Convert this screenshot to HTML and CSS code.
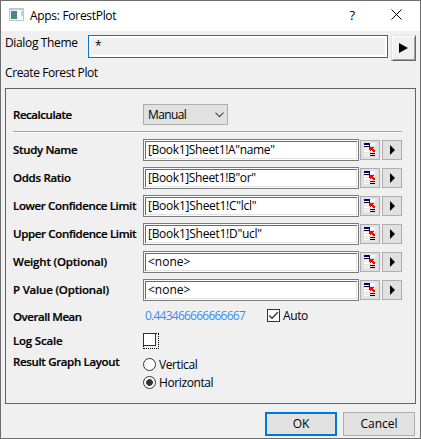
FILE: index.html
```html
<!DOCTYPE html>
<html lang="en">
<head>
<meta charset="utf-8">
<title>Apps: ForestPlot</title>
<link rel="stylesheet" href="styles.css">
</head>
<body>
<svg width="0" height="0" class="defs">
  <symbol id="pick" viewBox="0 0 11 13" shape-rendering="crispEdges">
    <path fill="#fff" d="M0 0h11v3H0zM0 5h11v1H0zM0 7h11v2H0zM0 10h11v1H0zM0 12h11v1H0z"/>
    <path fill="#000080" d="M0 0h6v2H0zM5 2h1v1H5z"/>
    <path fill="#000" d="M0 3h6v1H0zM6 10h5v1H6zM6 12h5v1H6z"/>
    <path fill="#f00" d="M5 4h5v1H9v1h1v1h1v2H9V8H8V7H7v1H6V7H5z"/>
  </symbol>
  <symbol id="arrow" viewBox="0 0 5 10"><path d="M0 0l5 5-5 5z"/></symbol>
</svg>
<div class="window">
  <header class="titlebar">
    <svg class="app" width="15" height="13" viewBox="0 0 15 13"><path fill="#c3c7cb" d="M0 0h15v13H0z"/><path fill="#eef1f5" d="M1 2h13v10H1z"/><path fill="#4b8594" d="M2 3h6v8H2z"/><path fill="#38936f" d="M2 7h5v3H2z"/><path fill="#fff" d="M9 2h4v10H9z"/><path fill="#b9d2e4" d="M12 3h2v5h-2z"/></svg>
    <h1><span class="t-title">Apps: ForestPlot</span></h1>
    <span class="help">?</span>
    <svg class="close" width="11" height="11" viewBox="0 0 11 11"><path d="M.5.5l10 10M10.5.5l-10 10" stroke="#000" fill="none"/></svg>
  </header>
  <div class="theme">
    <label><span class="t-theme">Dialog Theme</span></label>
    <div class="themebox">*</div>
    <button class="themebtn"><svg width="9" height="10" viewBox="0 0 9 10"><path d="M0 0l9 5-9 5z"/></svg></button>
  </div>
  <p class="desc"><span class="t-desc">Create Forest Plot</span></p>
  <main class="panel">
    <div class="recalc"><b class="t-recalc">Recalculate</b><div class="combo"><span class="t-manual">Manual</span><svg width="9" height="6" viewBox="0 0 9 6"><path d="M.5.7l4 4 4-4" fill="none" stroke="#444" stroke-width="1.1"/></svg></div></div>
    <hr>
    <div class="row"><b class="t-study">Study Name</b><div class="field"><span class="t-name">[Book1]Sheet1!A"name"</span></div><button class="pick"><svg width="11" height="13"><use href="#pick"/></svg></button><button><svg width="5" height="10"><use href="#arrow"/></svg></button></div>
    <div class="row"><b class="t-odds">Odds Ratio</b><div class="field"><span class="t-or">[Book1]Sheet1!B"or"</span></div><button class="pick"><svg width="11" height="13"><use href="#pick"/></svg></button><button><svg width="5" height="10"><use href="#arrow"/></svg></button></div>
    <div class="row"><b class="t-lower">Lower Confidence Limit</b><div class="field"><span class="t-lcl">[Book1]Sheet1!C"lcl"</span></div><button class="pick"><svg width="11" height="13"><use href="#pick"/></svg></button><button><svg width="5" height="10"><use href="#arrow"/></svg></button></div>
    <div class="row"><b class="t-lower">Upper Confidence Limit</b><div class="field"><span class="t-lcl">[Book1]Sheet1!D"ucl"</span></div><button class="pick"><svg width="11" height="13"><use href="#pick"/></svg></button><button><svg width="5" height="10"><use href="#arrow"/></svg></button></div>
    <div class="row"><b class="t-weight">Weight (Optional)</b><div class="field"><span class="t-none">&lt;none&gt;</span></div><button class="pick"><svg width="11" height="13"><use href="#pick"/></svg></button><button><svg width="5" height="10"><use href="#arrow"/></svg></button></div>
    <div class="row"><b class="t-weight">P Value (Optional)</b><div class="field"><span class="t-none">&lt;none&gt;</span></div><button class="pick"><svg width="11" height="13"><use href="#pick"/></svg></button><button><svg width="5" height="10"><use href="#arrow"/></svg></button></div>
    <div class="mean"><b class="t-mean">Overall Mean</b><span class="value"><span class="t-value">0.443466666666667</span></span><i class="check"><svg width="11" height="11" viewBox="0 0 11 11"><path d="M1.2 5.5l2.8 2.8L9.8 2.3" fill="none" stroke="#333" stroke-width="1.3"/></svg></i><span class="t-auto">Auto</span></div>
    <div class="log"><b class="t-log">Log Scale</b><div class="focus"><i class="check"></i></div></div>
    <div class="layout"><b class="t-layout">Result Graph Layout</b>
      <div class="radios"><label><i class="radio"></i><span class="t-vert">Vertical</span></label><label><i class="radio on"></i><span class="t-vert">Horizontal</span></label></div>
    </div>
  </main>
  <footer><button class="ok"><span>OK</span></button><button><span class="t-cancel">Cancel</span></button></footer>
</div>
</body>
</html>
```
FILE: styles.css
```css
* { box-sizing: border-box; }
body { margin: 0; font: 12px/16px "Open Sans", "Noto Sans", sans-serif; color: #000; }
.defs { position: absolute; }
svg { display: block; flex: none; }
button { font: inherit; color: #000; margin: 0; padding: 0; border-radius: 0; display: flex; align-items: center; justify-content: center; background: #e1e1e1; border: 1px solid #adadad; }
.window { width: 421px; height: 439px; border: 1px solid #6f6e6f; background: #f0f0f0; overflow: hidden; white-space: nowrap; }
.titlebar { height: 30px; background: #fff; display: flex; align-items: flex-start; padding: 7px 18px 0 8px; }
h1 { font: inherit; margin: 0 0 0 6px; flex: 1; }
.help { font-size: 13px; margin-right: 36px; margin-top: -1px; }
.close { margin-top: 1px; }
.theme { display: flex; padding: 4px 4px 0 4px; height: 31px; }
.theme label { width: 83px; }
.themebox { width: 300px; height: 23px; border: 1px solid #0078d7; box-shadow: inset 0 0 0 2px #fff; padding: 1px 6px; line-height: 18px; }
.themebtn { width: 25px; height: 26px; margin-left: 3px; background: #f0f0f0; border: solid; border-width: 1px; border-color: #e3e3e3 #696969 #696969 #e3e3e3; box-shadow: inset 1px 1px #fff, inset -1px -1px #a0a0a0; }
.desc { margin: 3px 0 0 4px; height: 23px; line-height: 16px; }
.panel { margin: 0 4px; height: 316px; border: 1px solid #646466; padding: 15px 13px 0 7px; }
b { width: 130px; flex: none; font-weight: 600; font-size: 11.5px; -webkit-text-stroke: .2px #000; }
.recalc { display: flex; align-items: center; height: 21px; }
.combo { width: 85px; height: 21px; border: 1px solid #adadad; background: #e1e1e1; display: flex; align-items: center; justify-content: space-between; padding: 0 3px 0 4px; }
hr { margin: 6px 0; border: 0; height: 2px; background: #a0a0a0; border-bottom: 1px solid #fff; }
.row { display: flex; align-items: center; height: 22px; margin-bottom: 6px; }
.field { width: 216px; height: 22px; flex: none; background: #fff; border: 1px solid #7a7a7a; padding: 0 4px; line-height: 19px; box-shadow: inset 0 0 0 1px #fff, inset 2px 2px #696969, inset -2px -2px #e3e3e3; }
.row button { width: 20px; height: 20px; margin-left: 1px; }
.row button + button { margin-left: 2px; }
.row .pick { padding: 0 1px 1px 0; }
.mean { display: flex; align-items: center; height: 13px; margin-top: 8px; }
.mean b { padding-top: 3px; }
.value { width: 124px; padding-left: 2px; color: #3c8cf0; }
.mean span { line-height: 14px; }
.t-auto { padding-top: 1px; }
.check { width: 13px; height: 13px; background: #fff; border: 1px solid #333; display: block; }
.mean .check { margin-right: 3px; }
.log { display: flex; align-items: center; height: 16px; margin-top: 11px; }
.focus { width: 16px; height: 16px; border: 1px dotted #000; }
.focus .check { margin: -1px; }
.layout { display: flex; margin-top: 5px; }
.radios label { display: flex; align-items: center; height: 18px; }
.radios { margin-top: 1px; }
.radios span { padding-top: 1px; }
.radio { width: 13px; height: 13px; border: 1px solid #333; border-radius: 50%; background: #fff; margin-right: 3px; }
.on { background: radial-gradient(circle, #333 3px, #fff 3.7px); }
footer { display: flex; justify-content: flex-end; gap: 6px; padding: 8px 5px 0; }
footer button { width: 72px; height: 24px; }
footer .ok { border: 2px solid #0078d7; }
.t-title { letter-spacing: -.3px; }
.t-theme { letter-spacing: -.35px; }
.t-desc { letter-spacing: -.4px; }
.t-manual { letter-spacing: -.6px; }
.t-name, .t-or { letter-spacing: -.35px; }
.t-lcl { letter-spacing: -.28px; }
.t-value { letter-spacing: -.76px; }
.t-auto, .t-vert { letter-spacing: -.4px; }
.t-recalc, .t-mean { letter-spacing: -.45px; }
.t-study, .t-layout { letter-spacing: -.35px; }
.t-odds { letter-spacing: -.3px; }
.t-log { letter-spacing: -.2px; }
.t-lower { letter-spacing: -.35px; }
.t-weight { letter-spacing: -.2px; }
```
